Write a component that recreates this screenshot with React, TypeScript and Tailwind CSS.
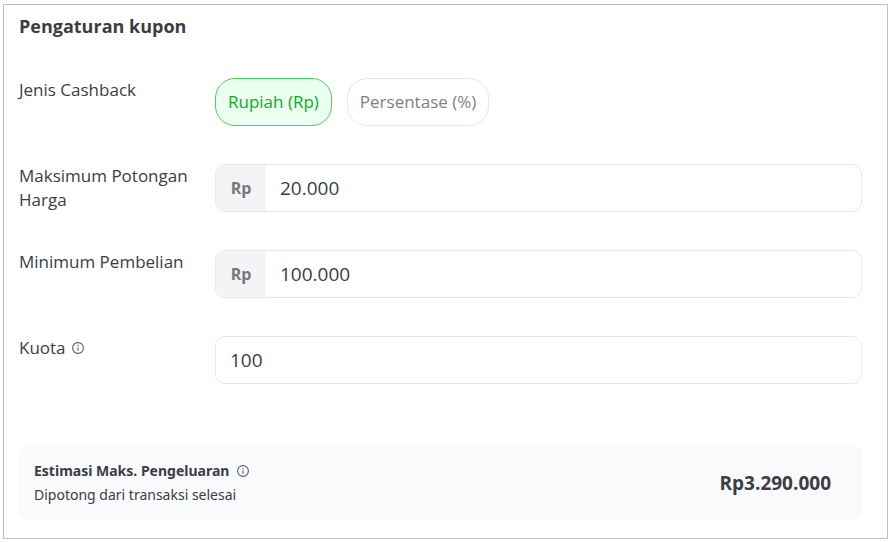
import { useState } from "react";
import type { ReactNode } from "react";

type CashbackType = "rupiah" | "persentase";

const cashbackTypes: { value: CashbackType; label: string }[] = [
  { value: "rupiah", label: "Rupiah (Rp)" },
  { value: "persentase", label: "Persentase (%)" },
];

function InfoIcon() {
  return (
    <svg className="w-3 h-3 shrink-0" viewBox="0 0 12 12" fill="none" aria-hidden="true">
      <circle cx="6" cy="6" r="5.4" stroke="#5b6070" strokeWidth="1.1" />
      <path d="M6 5.2V8.8" stroke="#5b6070" strokeWidth="1.1" />
      <circle cx="6" cy="3.5" r="0.7" fill="#5b6070" />
    </svg>
  );
}

function Row({ label, children }: { label: ReactNode; children: ReactNode }) {
  return (
    <div className="flex items-start">
      <div className="w-[196px] shrink-0 text-[17px] leading-6">{label}</div>
      <div className="flex-1 min-w-0">{children}</div>
    </div>
  );
}

interface TextFieldProps {
  id: string;
  prefix?: string;
  defaultValue: string;
}

function TextField({ id, prefix, defaultValue }: TextFieldProps) {
  return (
    <div className="flex h-12 rounded-[10px] border border-[#e5e7e9] overflow-hidden">
      {prefix && (
        <span className="w-[50px] shrink-0 flex items-center justify-center bg-[#f3f4f6] text-base font-bold text-[#74777c]">
          {prefix}
        </span>
      )}
      <input
        id={id}
        type="text"
        inputMode="numeric"
        defaultValue={defaultValue}
        className="flex-1 min-w-0 px-3.5 text-[19px] bg-white outline-none"
      />
    </div>
  );
}

export default function App() {
  const [cashbackType, setCashbackType] = useState<CashbackType>("rupiah");

  return (
    <div className="min-h-screen bg-white pt-1 pl-[3px] pr-1.5 pb-[3px] font-['Open_Sans',sans-serif] text-[#3b3d45]">
      <section className="border border-[#bfbfbf] pt-[9px] pl-[15px] pr-[25px] pb-[19px]">
        <h2 className="text-lg leading-6 font-bold">Pengaturan kupon</h2>

        <form className="mt-10 flex flex-col gap-[38px]">
          <Row label={<span id="cashback-label">Jenis Cashback</span>}>
            <div role="group" aria-labelledby="cashback-label" className="flex gap-[15px]">
              {cashbackTypes.map((type) => (
                <button
                  key={type.value}
                  type="button"
                  aria-pressed={cashbackType === type.value}
                  onClick={() => setCashbackType(type.value)}
                  className={`h-12 px-3 rounded-[20px] border text-[17px] ${
                    cashbackType === type.value
                      ? "border-[#4fd15a] bg-[#eafff0] text-[#0dab19]"
                      : "border-[#e5e7e9] bg-white text-[#7c7f84]"
                  }`}
                >
                  {type.label}
                </button>
              ))}
            </div>
          </Row>

          <Row label={<label htmlFor="max-discount">Maksimum Potongan Harga</label>}>
            <TextField id="max-discount" prefix="Rp" defaultValue="20.000" />
          </Row>

          <Row label={<label htmlFor="min-purchase">Minimum Pembelian</label>}>
            <TextField id="min-purchase" prefix="Rp" defaultValue="100.000" />
          </Row>

          <Row
            label={
              <label htmlFor="quota" className="flex items-center gap-1.5">
                Kuota
                <InfoIcon />
              </label>
            }
          >
            <TextField id="quota" defaultValue="100" />
          </Row>
        </form>

        {/* Estimate */}
        <div className="mt-[61px] flex items-center justify-between rounded-lg bg-[#f9fafc] pl-[15px] pr-[31px] pt-3.5 pb-3">
          <div className="text-sm leading-6 font-['Noto_Sans',sans-serif]">
            <div className="flex items-center gap-2 font-bold">
              Estimasi Maks. Pengeluaran
              <InfoIcon />
            </div>
            <p>Dipotong dari transaksi selesai</p>
          </div>
          <span className="text-[19px] font-bold">Rp3.290.000</span>
        </div>
      </section>
    </div>
  );
}
